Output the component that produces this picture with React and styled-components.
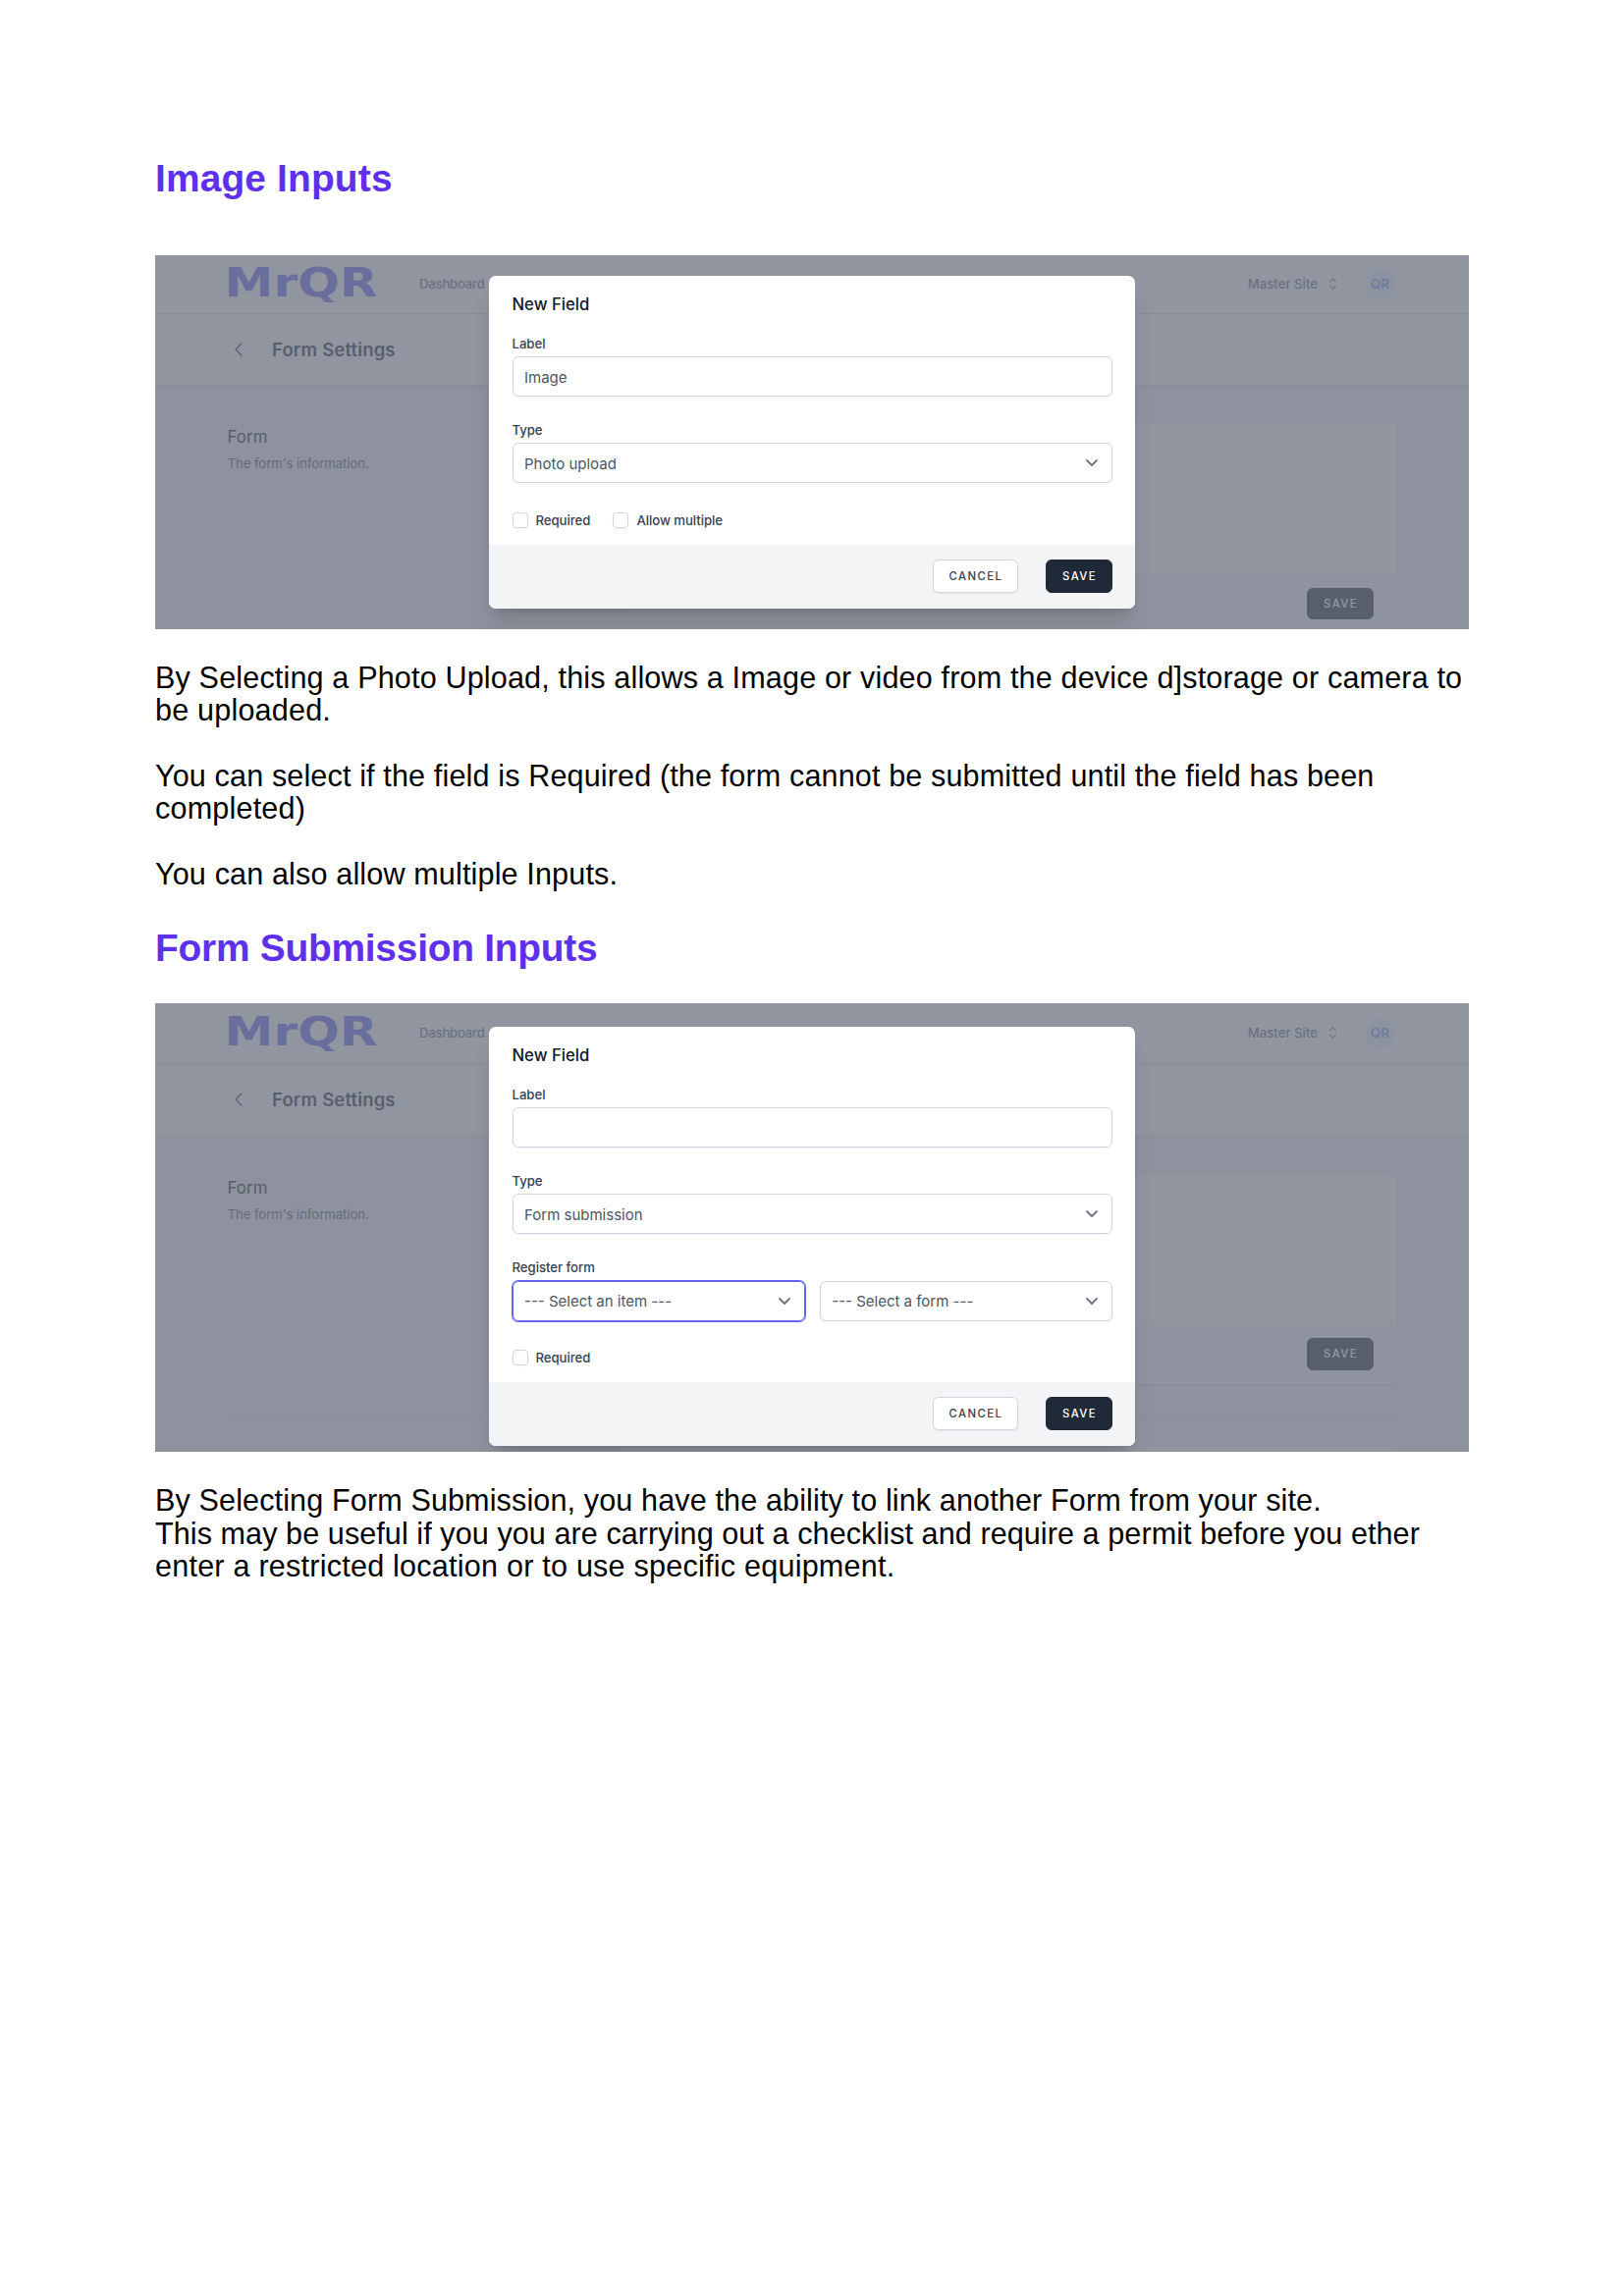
import React from "react";
import styled, { createGlobalStyle } from "styled-components";

const GlobalStyle = createGlobalStyle`
  *, *::before, *::after { box-sizing: border-box; }
  body { margin: 0; background: #fff; }
`;

const ui = `Inter, "Noto Sans", sans-serif`;

const Sheet = styled.main`
  width: 1654px;
  min-height: 2339px;
  padding: 158.5px 158px 0;
  display: flex;
  flex-direction: column;
  background: #fff;
  font-family: "Liberation Sans", Arial, sans-serif;
`;

const Heading = styled.h1`
  margin: 0 0 ${(p) => p.$gap}px;
  font-size: 38.9px;
  line-height: 46px;
  font-weight: 700;
  color: #5e30eb;
  letter-spacing: ${(p) => p.$track || 0}px;
`;

const Copy = styled.div`
  display: flex;
  flex-direction: column;
  gap: 33.33px;
  margin: ${(p) => p.$top}px 0 ${(p) => p.$bottom || 0}px;
`;

const Paragraph = styled.p`
  margin: 0;
  font-size: 30.56px;
  line-height: 33.33px;
  color: #000;
`;

const Line = styled.span`
  display: block;
  white-space: nowrap;
  letter-spacing: ${(p) => p.$track}px;
`;

/* Application frame */

const Frame = styled.section`
  position: relative;
  flex: none;
  width: 1338px;
  height: ${(p) => p.$height}px;
  overflow: hidden;
  background: #f3f4f6;
  font-family: ${ui};
`;

const NavBar = styled.nav`
  display: flex;
  align-items: center;
  height: ${(p) => p.$height}px;
  padding: 0 75px 0 73.5px;
  background: #fff;
  border-bottom: 1px solid #e5e7eb;
`;

const Logo = styled.svg`
  width: 152px;
  height: 46px;
  overflow: visible;
`;

const NavLink = styled.span`
  margin-left: 43.5px;
  font-size: 13.2px;
  font-weight: 450;
  letter-spacing: -0.24px;
  color: #6b7280;
`;

const SiteMenu = styled.div`
  display: flex;
  align-items: center;
  gap: 12px;
  margin-left: auto;
  font-size: 13.2px;
  font-weight: 450;
  color: #6b7280;
`;

const Avatar = styled.div`
  display: grid;
  place-items: center;
  width: 31px;
  height: 31px;
  margin-left: 29px;
  border-radius: 50%;
  background: #ebf4ff;
  color: #7f9cf5;
  font-size: 13.6px;
  font-weight: 600;
`;

const PageHeader = styled.header`
  display: flex;
  align-items: center;
  gap: 30.5px;
  height: 72.6px;
  padding: 0 80.5px;
  background: #fff;
  box-shadow: 0 1px 3px rgba(0, 0, 0, 0.16);
`;

const PageTitle = styled.h2`
  margin: 0;
  font-size: 18.5px;
  font-weight: 600;
  letter-spacing: 0.15px;
  color: #1f2937;
`;

const Content = styled.div`
  padding: 39px 73px 0 73.5px;
`;

const Section = styled.div`
  display: grid;
  grid-template-columns: 1fr 787px;
`;

const SectionTitle = styled.h3`
  margin: 0 0 3px;
  font-size: 16.8px;
  line-height: 28px;
  font-weight: 400;
  letter-spacing: 0.1px;
  color: #111827;
`;

const SectionText = styled.p`
  margin: 0;
  font-size: 13.2px;
  line-height: 20px;
  letter-spacing: -0.08px;
  color: #4b5563;
`;

const Card = styled.div`
  border-radius: 6px;
  overflow: hidden;
  background: #fff;
  box-shadow: 0 1px 3px rgba(0, 0, 0, 0.14);
`;

const CardBody = styled.div`
  height: 153.5px;
`;

const CardFooter = styled.div`
  display: flex;
  justify-content: flex-end;
  padding: 14px 24px;
  background: #f5f7f9;
`;

const Divider = styled.hr`
  margin: 31.5px 0;
  border: 0;
  border-top: 1px solid #e5e7eb;
`;

const Button = styled.button`
  height: ${(p) => p.$height || 34}px;
  width: ${(p) => p.$width || 68}px;
  padding: 0 0 0 1px;
  border: 1px solid ${(p) => (p.$plain ? "#d1d5db" : "#1f2937")};
  border-radius: 6px;
  background: ${(p) => (p.$plain ? "#fff" : "#1f2937")};
  color: ${(p) => (p.$plain ? "#374151" : "#fff")};
  box-shadow: ${(p) => (p.$plain ? "0 1px 2px rgba(0,0,0,.06)" : "none")};
  font-family: ${ui};
  font-size: 11.3px;
  font-weight: 550;
  letter-spacing: 1.45px;
`;

/* Dialog over the page */

const Backdrop = styled.div`
  position: absolute;
  inset: 0;
  display: flex;
  align-items: flex-start;
  justify-content: center;
  padding-top: ${(p) => p.$top}px;
  background: rgba(107, 114, 128, 0.75);
`;

const Dialog = styled.div`
  width: 658px;
  border-radius: 7px;
  overflow: hidden;
  background: #fff;
  box-shadow: 0 20px 25px -5px rgba(0, 0, 0, 0.12), 0 8px 10px -6px rgba(0, 0, 0, 0.12);
`;

const DialogBody = styled.div`
  display: flex;
  flex-direction: column;
  padding: 14.7px 23px 17.6px 23.5px;
`;

const DialogTitle = styled.h4`
  margin: 0 0 16px;
  font-size: 16.7px;
  line-height: 28px;
  font-weight: 450;
  color: #111827;
`;

const Fields = styled.div`
  display: flex;
  flex-direction: column;
  gap: 23.6px;
  margin-bottom: 29.3px;
`;

const Field = styled.div`
  display: flex;
  flex-direction: column;
  gap: 3.6px;
`;

const Label = styled.label`
  font-size: 13.2px;
  line-height: 20px;
  font-weight: 450;
  letter-spacing: -0.05px;
  color: #374151;
`;

const Controls = styled.div`
  display: grid;
  grid-auto-flow: column;
  grid-auto-columns: 1fr;
  gap: 15px;
`;

const Control = styled.div`
  display: flex;
  align-items: center;
  justify-content: space-between;
  height: 41px;
  padding: 1px 13px 0 11.5px;
  border: 1px solid ${(p) => (p.$focus ? "#6366f1" : "#d1d5db")};
  border-radius: 6px;
  box-shadow: ${(p) => (p.$focus ? "0 0 0 1px #6366f1, " : "")}0 1px 2px rgba(0, 0, 0, 0.05);
  font-size: 15px;
  color: #4b5563;
  white-space: pre;
`;

const CheckRow = styled.div`
  display: flex;
  gap: 23px;
  height: 16px;
`;

const CheckItem = styled.div`
  display: flex;
  align-items: center;
  gap: 8px;
`;

const CheckBox = styled.span`
  width: 16px;
  height: 16px;
  border: 1px solid #d1d5db;
  border-radius: 4px;
  box-shadow: 0 1px 2px rgba(0, 0, 0, 0.05);
`;

const DialogFooter = styled.div`
  display: flex;
  justify-content: flex-end;
  gap: 28px;
  height: 65px;
  padding: 15px 23px;
  background: #f3f4f6;
`;

const ChevronDown = () => (
  <svg width="14" height="10" viewBox="0 0 14 10" fill="none" stroke="#6b7280" strokeWidth="1.8" strokeLinecap="round" strokeLinejoin="round">
    <path d="M2 2l5 5 5-5" />
  </svg>
);

const ChevronLeft = () => (
  <svg width="8" height="14" viewBox="0 0 8 14" fill="none" stroke="#1f2937" strokeWidth="1.3" strokeLinecap="round" strokeLinejoin="round">
    <path d="M7 1L1 7l6 6" />
  </svg>
);

const UpDown = () => (
  <svg width="7" height="12" viewBox="0 0 7 12" fill="none" stroke="#6b7280" strokeWidth="1.1" strokeLinecap="round" strokeLinejoin="round">
    <path d="M0.6 3.7L3.5 0.9l2.9 2.8M0.6 8.3l2.9 2.8 2.9-2.8" />
  </svg>
);

function Screen({ height, navHeight, dialogTop, fields, checks, nextSection }) {
  return (
    <Frame $height={height}>
      <NavBar $height={navHeight}>
        <Logo viewBox="0 0 152 46">
          <text x="-3.5" y="35.7" fontFamily="DejaVu Sans" fontWeight="700" fontSize="41" fill="#6366f1" textLength="156" lengthAdjust="spacingAndGlyphs">MrQR</text>
        </Logo>
        <NavLink>Dashboard</NavLink>
        <SiteMenu>
          Master Site
          <UpDown />
        </SiteMenu>
        <Avatar>QR</Avatar>
      </NavBar>
      <PageHeader>
        <ChevronLeft />
        <PageTitle>Form Settings</PageTitle>
      </PageHeader>
      <Content>
        <Section>
          <div>
            <SectionTitle>Form</SectionTitle>
            <SectionText>The form's information.</SectionText>
          </div>
          <Card>
            <CardBody />
            <CardFooter>
              <Button $height={32.5}>SAVE</Button>
            </CardFooter>
          </Card>
        </Section>
        {nextSection && (
          <>
            <Divider />
            <Section>
              <SectionTitle>{nextSection}</SectionTitle>
              <Card>
                <CardBody />
              </Card>
            </Section>
          </>
        )}
      </Content>
      <Backdrop $top={dialogTop}>
        <Dialog>
          <DialogBody>
            <DialogTitle>New Field</DialogTitle>
            <Fields>
              {fields.map((field) => (
                <Field key={field.label}>
                  <Label>{field.label}</Label>
                  <Controls>
                    {field.controls.map((c, i) => (
                      <Control key={i} $focus={c.focus}>
                        {c.text}
                        {c.select && <ChevronDown />}
                      </Control>
                    ))}
                  </Controls>
                </Field>
              ))}
            </Fields>
            <CheckRow>
              {checks.map((text) => (
                <CheckItem key={text}>
                  <CheckBox />
                  <Label>{text}</Label>
                </CheckItem>
              ))}
            </CheckRow>
          </DialogBody>
          <DialogFooter>
            <Button $plain $width={87}>CANCEL</Button>
            <Button>SAVE</Button>
          </DialogFooter>
        </Dialog>
      </Backdrop>
    </Frame>
  );
}

const imageFields = [
  { label: "Label", controls: [{ text: "Image" }] },
  { label: "Type", controls: [{ text: "Photo upload", select: true }] },
];

const submissionFields = [
  { label: "Label", controls: [{ text: "" }] },
  { label: "Type", controls: [{ text: "Form submission", select: true }] },
  {
    label: "Register form",
    controls: [
      { text: "--- Select an item ---", select: true, focus: true },
      { text: "--- Select a form ---", select: true },
    ],
  },
];

export default function App() {
  return (
    <>
      <GlobalStyle />
      <Sheet>
        <Heading $gap={55.5} $track={0.15}>Image Inputs</Heading>
        <Screen height={380.67} navHeight={59.5} dialogTop={21} fields={imageFields} checks={["Required", "Allow multiple"]} />
        <Copy $top={33} $bottom={36.2}>
          <Paragraph>
            <Line $track={0.16}>By Selecting a Photo Upload, this allows a Image or video from the device d]storage or camera to</Line>
            <Line $track={0.2}>be uploaded.</Line>
          </Paragraph>
          <Paragraph>
            <Line $track={0.14}>You can select if the field is Required (the form cannot be submitted until the field has been</Line>
            <Line $track={0.2}>completed)</Line>
          </Paragraph>
          <Paragraph>
            <Line $track={0.15}>You can also allow multiple Inputs.</Line>
          </Paragraph>
        </Copy>
        <Heading $gap={32.8} $track={-0.25}>Form Submission Inputs</Heading>
        <Screen height={457} navHeight={62} dialogTop={24} fields={submissionFields} checks={["Required"]} nextSection="Form fields" />
        <Copy $top={33.3}>
          <Paragraph>
            <Line $track={0.13}>By Selecting Form Submission, you have the ability to link another Form from your site.</Line>
            <Line $track={0.08}>This may be useful if you you are carrying out a checklist and require a permit before you ether</Line>
            <Line $track={0.23}>enter a restricted location or to use specific equipment.</Line>
          </Paragraph>
        </Copy>
      </Sheet>
    </>
  );
}
